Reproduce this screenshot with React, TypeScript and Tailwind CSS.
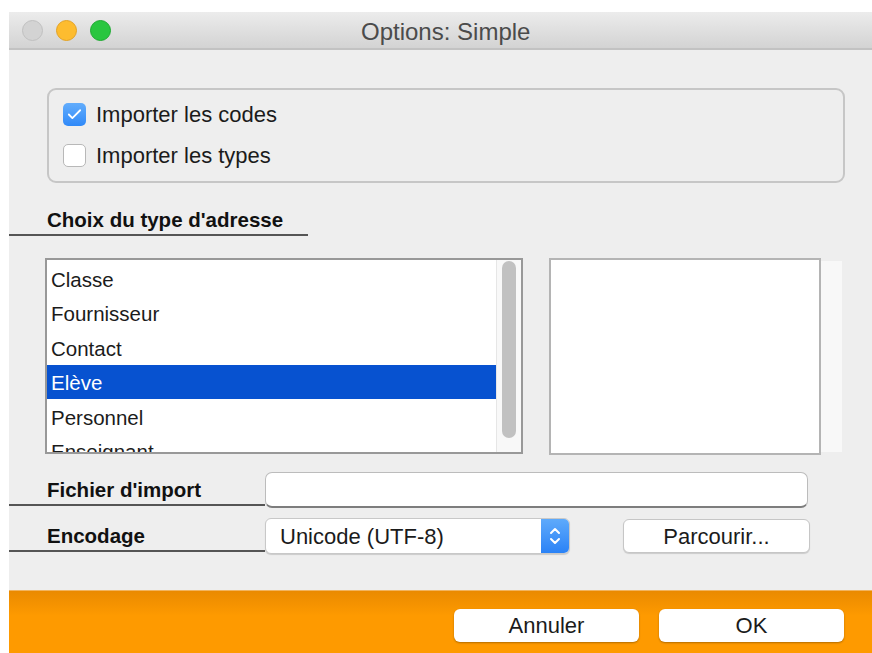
import { Check } from 'lucide-react';

const font = { fontFamily: '"Liberation Sans", Arial, sans-serif' };

const addressTypes = ['Classe', 'Fournisseur', 'Contact', 'Elève', 'Personnel', 'Enseignant'];

function TrafficLights() {
  return (
    <div className="flex items-center gap-[13px] pl-[13px]">
      <span className="w-[21px] h-[21px] rounded-full bg-[#d3d3d3] border border-[#c0c0c0]" />
      <span className="w-[21px] h-[21px] rounded-full bg-[#fdbc2f] border border-[#e3a224]" />
      <span className="w-[21px] h-[21px] rounded-full bg-[#29c63f] border border-[#1eaa31]" />
    </div>
  );
}

function Checkbox({ checked, label }: { checked: boolean; label: string }) {
  return (
    <div className="flex items-center h-[23px]">
      {checked ? (
        <span className="w-[23px] h-[23px] rounded-[5px] bg-linear-to-b from-[#62adfc] to-[#2f89f8] flex items-center justify-center">
          <Check className="w-[17px] h-[17px] text-white" strokeWidth={2.5} />
        </span>
      ) : (
        <span className="w-[23px] h-[23px] rounded-[5px] bg-white border border-[#b8b8b8]" />
      )}
      <span className="ml-[10px] text-[22px] text-[#1b1b1b]">{label}</span>
    </div>
  );
}

function SectionLabel({ text, width, height }: { text: string; width: string; height: string }) {
  return (
    <div className={`${width} ${height} flex items-end pl-[38px] pb-[2px] border-b-2 border-[#555555] shrink-0`}>
      <span className="text-[20.5px] font-bold text-[#111] leading-none pb-[2px]">{text}</span>
    </div>
  );
}

const footerButton =
  'w-[185px] h-[33px] pb-[3px] bg-white rounded-[6px] shadow-[0_1px_2px_rgba(0,0,0,0.3)] text-[22px] text-[#1b1b1b]';

export default function App() {
  return (
    <div className="w-[872px] h-[653px] bg-white pt-[12px] pl-[9px] flex" style={font}>
      <div className="flex-1 flex flex-col bg-[#eeeeee]">
        {/* title bar */}
        <div className="h-[38px] shrink-0 flex items-center bg-linear-to-b from-[#ececec] to-[#d3d3d3] border-b-2 border-[#c2c2c2]">
          <TrafficLights />
          <span className="ml-[250px] pt-[4px] text-[24px] text-[#4b4b4b]">Options: Simple</span>
        </div>

        {/* import options */}
        <div className="mt-[38px] ml-[38px] w-[798px] h-[95px] shrink-0 rounded-[9px] border-2 border-[#c6c6c6] flex flex-col gap-[18px] pl-[14px] pt-[13px]">
          <Checkbox checked label="Importer les codes" />
          <Checkbox checked={false} label="Importer les types" />
        </div>

        <div className="mt-[16px]">
          <SectionLabel text="Choix du type d'adresse" width="w-[299px]" height="h-[37px]" />
        </div>

        {/* address type list + preview */}
        <div className="mt-[22px] flex shrink-0">
          <div className="ml-[36px] w-[478px] h-[196px] bg-white border-2 border-[#989898] flex overflow-hidden">
            <div className="flex-1 flex flex-col pt-[1px]">
              {addressTypes.map((t) => (
                <div
                  key={t}
                  className={`h-[34.5px] shrink-0 flex items-center pl-[4px] pt-[4px] text-[20.5px] ${
                    t === 'Elève' ? 'bg-[#0752d0] text-white' : 'text-[#1b1b1b]'
                  }`}
                >
                  {t}
                </div>
              ))}
            </div>
            <div className="w-[25px] bg-[#f8f8f8] border-l border-[#e6e6e6] flex justify-center pt-[1px]">
              <div className="w-[14px] h-[177px] rounded-full bg-[#c1c1c1]" />
            </div>
          </div>
          <div className="ml-[26px] w-[272px] h-[197px] bg-white border-2 border-[#b4b4b4]" />
          <div className="mt-[3px] w-[21px] h-[191px] bg-[#f8f8f8]" />
        </div>

        {/* import file */}
        <div className="mt-[17px] flex items-start shrink-0">
          <SectionLabel text="Fichier d'import" width="w-[256px]" height="h-[34px]" />
          <div className="w-[543px] h-[36px] bg-white rounded-[7px] border border-[#bcbcbc] border-b-2 border-b-[#7d7d7d]" />
        </div>

        {/* encoding */}
        <div className="mt-[10px] flex items-start shrink-0">
          <SectionLabel text="Encodage" width="w-[256px]" height="h-[34px]" />
          <div className="w-[305px] h-[36px] bg-white rounded-[6px] border border-[#c8c8c8] shadow-[0_1px_1px_rgba(0,0,0,0.15)] flex items-center overflow-hidden">
            <span className="flex-1 pl-[14px] text-[22px] text-[#1b1b1b]">Unicode (UTF-8)</span>
            <div className="w-[28px] h-full bg-linear-to-b from-[#5eaafb] to-[#2a82f6] flex flex-col items-center justify-center">
              <svg width="12" height="22" viewBox="0 0 12 22" fill="none" stroke="white" strokeWidth="2" strokeLinecap="round" strokeLinejoin="round">
                <path d="M2 8 L6 4 L10 8" />
                <path d="M2 14 L6 18 L10 14" />
              </svg>
            </div>
          </div>
          <button className="ml-[53px] mt-[1px] w-[187px] h-[34px] pb-[1px] bg-white rounded-[6px] border border-[#c6c6c6] shadow-[0_1px_1px_rgba(0,0,0,0.15)] text-[22px] text-[#1b1b1b]">
            Parcourir...
          </button>
        </div>

        <div className="flex-1" />

        {/* footer */}
        <div className="h-[63px] shrink-0 border-t border-[#f2b45e] bg-linear-to-b from-[#ea8a00] via-[#fe9a00] via-40% to-[#fe9a00] flex justify-end items-start pt-[18px] pr-[28px] gap-[20px]">
          <button className={footerButton}>Annuler</button>
          <button className={footerButton}>OK</button>
        </div>
      </div>
    </div>
  );
}
